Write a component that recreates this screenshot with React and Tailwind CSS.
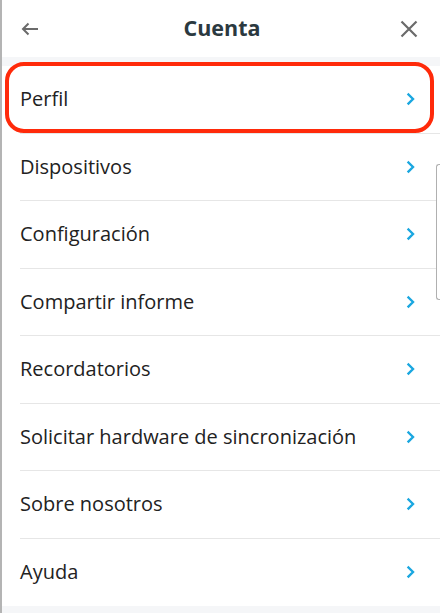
import React from 'react';

const OPCIONES = [
  'Perfil',
  'Dispositivos',
  'Configuración',
  'Compartir informe',
  'Recordatorios',
  'Solicitar hardware de sincronización',
  'Sobre nosotros',
  'Ayuda',
];

const Chevron = () => (
  <svg width="10" height="14" viewBox="0 0 10 14" fill="none">
    <path d="M2.5 2.5 L7 7 L2.5 11.5" stroke="#1aa7e0" strokeWidth="2.4" strokeLinecap="square" />
  </svg>
);

const App = () => {
  return (
    <div
      className="relative w-[440px] h-[613px] bg-white overflow-hidden border-l-2 border-[#b4b4b4]"
      style={{ fontFamily: '"Open Sans", Lato, sans-serif', fontVariantLigatures: 'none' }}
    >
      {/* Header */}
      <div className="h-[57px] flex items-center justify-between pl-[18px] pr-[22px]">
        <svg width="20" height="16" viewBox="0 0 20 16" fill="none">
          <path d="M18 8 H3 M8.5 2.5 L3 8 L8.5 13.5" stroke="#6b6b6b" strokeWidth="2" />
        </svg>
        <h1 className="text-[21.5px] font-bold text-[#2b3940] ml-[4px]">Cuenta</h1>
        <svg width="18" height="18" viewBox="0 0 18 18" fill="none">
          <path d="M1.5 1.5 L16.5 16.5 M16.5 1.5 L1.5 16.5" stroke="#6b6b6b" strokeWidth="2.2" />
        </svg>
      </div>
      <div className="h-[9px] bg-[#f5f6f8]" />

      {/* Lista */}
      <div className="flex flex-col">
        {OPCIONES.map((op, i) => (
          <div key={op} className="relative h-[67.5px] pl-[18px]">
            <div
              className={`h-full flex items-center justify-between pr-[24px] ${
                i < OPCIONES.length - 1 ? 'border-b border-[#e6e6e6]' : ''
              }`}
            >
              <span className="text-[20px] text-[#222222]">{op}</span>
              <Chevron />
            </div>
            {i === 0 && (
              <div className="absolute left-[3px] right-[6px] top-[-4px] bottom-[1px] rounded-[19px] border-4 border-[#ff2a0a]" />
            )}
          </div>
        ))}
      </div>
      <div className="h-[10px] bg-[#f5f6f8]" />

      {/* Scrollbar */}
      <div className="absolute right-0 top-[164px] w-[4px] h-[136px] rounded-l-[3px] border border-r-0 border-[#b0b0b0] bg-white" />
    </div>
  );
};

export default App;
